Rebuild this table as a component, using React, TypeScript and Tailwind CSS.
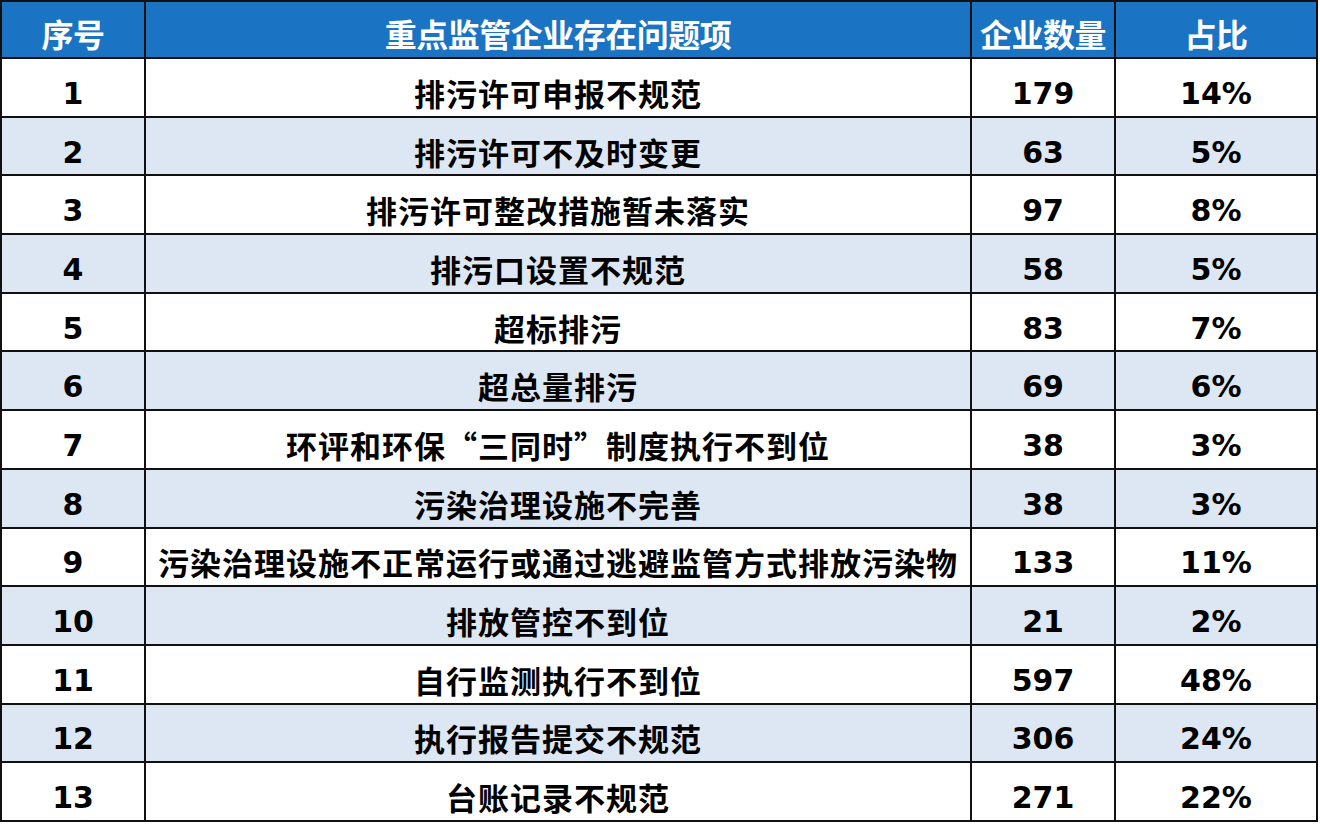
const rows: [string, string, string, string][] = [
  ['1', '排污许可申报不规范', '179', '14%'],
  ['2', '排污许可不及时变更', '63', '5%'],
  ['3', '排污许可整改措施暂未落实', '97', '8%'],
  ['4', '排污口设置不规范', '58', '5%'],
  ['5', '超标排污', '83', '7%'],
  ['6', '超总量排污', '69', '6%'],
  ['7', '环评和环保“三同时”制度执行不到位', '38', '3%'],
  ['8', '污染治理设施不完善', '38', '3%'],
  ['9', '污染治理设施不正常运行或通过逃避监管方式排放污染物', '133', '11%'],
  ['10', '排放管控不到位', '21', '2%'],
  ['11', '自行监测执行不到位', '597', '48%'],
  ['12', '执行报告提交不规范', '306', '24%'],
  ['13', '台账记录不规范', '271', '22%'],
];

const cjk = "font-['Noto_Sans_CJK_SC',sans-serif]";
const num = "font-['DejaVu_Sans','Noto_Sans_CJK_SC',sans-serif]";
const cell = 'flex items-center justify-center border-r-2 border-b-2 border-[#111] text-black font-bold';

export default function App() {
  return (
    <div className="w-[1320px] h-[826px] bg-white">
      <div className="grid w-[1318px] grid-cols-[144px_826px_144px_202px] grid-rows-[57px_repeat(13,58.7px)] border-l-2 border-t-2 border-[#111]">
        {['序号', '重点监管企业存在问题项', '企业数量', '占比'].map((h) => (
          <div
            key={h}
            className={`flex items-center justify-center border-r-2 border-b-2 border-[#111] bg-[#1b73c3] pt-1.5 text-[32px] font-bold text-white tracking-[-0.5px] ${cjk}`}
          >
            {h}
          </div>
        ))}
        {rows.map((r, i) => {
          const bg = i % 2 === 1 ? 'bg-[#dde7f3]' : 'bg-white';
          return [
            <div key={`a${i}`} className={`${cell} pt-3 text-[30px] ${num} ${bg}`}>
              {r[0]}
            </div>,
            <div key={`b${i}`} className={`${cell} whitespace-nowrap pt-2.5 text-[31px] leading-none tracking-[1px] ${cjk} ${bg}`}>
              {r[1]}
            </div>,
            <div key={`c${i}`} className={`${cell} pt-3 text-[30px] ${num} ${bg}`}>
              {r[2]}
            </div>,
            <div key={`d${i}`} className={`${cell} pt-3 text-[30px] ${num} ${bg}`}>
              {r[3]}
            </div>,
          ];
        })}
      </div>
    </div>
  );
}
